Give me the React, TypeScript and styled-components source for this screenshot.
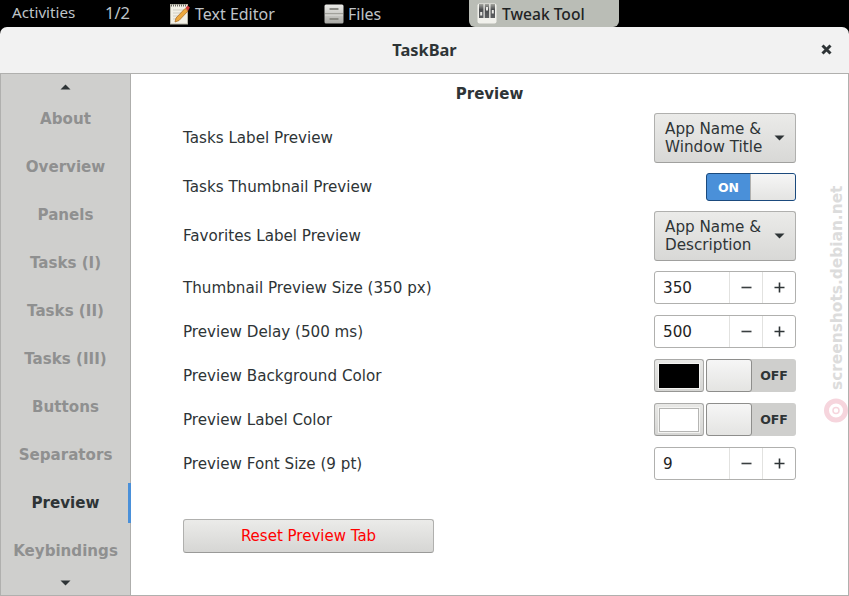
import styled, { createGlobalStyle } from "styled-components";

const GlobalStyle = createGlobalStyle`
  html, body {
    margin: 0;
    padding: 0;
    background: #000;
  }
  #root {
    width: 849px;
    height: 596px;
    overflow: hidden;
  }
`;

const Desktop = styled.div`
  position: relative;
  width: 849px;
  height: 596px;
  display: flex;
  flex-direction: column;
  background: #000;
  font-family: "DejaVu Sans", sans-serif;
  color: #2e3436;
`;

const TopBar = styled.div`
  height: 27px;
  display: flex;
  align-items: stretch;
  font-family: "Noto Sans", sans-serif;
  color: #bfc4c8;
  background: #000;
`;

const PanelText = styled.div<{ $width: number; $pad: number; $size: number }>`
  width: ${(p) => p.$width}px;
  padding-left: ${(p) => p.$pad}px;
  box-sizing: border-box;
  font-size: ${(p) => p.$size}px;
  line-height: 25px;
`;

const TaskTab = styled.div<{ $active?: boolean; $width: number }>`
  width: ${(p) => p.$width}px;
  display: flex;
  align-items: center;
  gap: ${(p) => (p.$active ? 5 : 4)}px;
  padding-left: ${(p) => (p.$active ? 8 : 0)}px;
  box-sizing: border-box;
  border-radius: 0 0 6px 6px;
  background: ${(p) => (p.$active ? "#babdb6" : "transparent")};
  color: ${(p) => (p.$active ? "#1f2324" : "#bfc4c8")};
  font-size: ${(p) => (p.$active ? 15.6 : 16)}px;
  font-weight: ${(p) => (p.$active ? 500 : 400)};
`;

const Window = styled.div`
  flex: 1;
  display: flex;
  flex-direction: column;
  min-height: 0;
  border-radius: 7px 7px 0 0;
  background: #f2f2f2;
  overflow: hidden;
`;

const TitleBar = styled.div`
  position: relative;
  height: 47px;
  flex: none;
  display: flex;
  align-items: center;
  justify-content: center;
  padding-bottom: 2px;
  box-sizing: border-box;
  font-family: "Noto Sans", sans-serif;
  font-weight: 700;
  font-size: 16.4px;
  color: #2e3436;
  border-bottom: 1px solid #b0b0ae;
`;

const CloseGlyph = styled.svg`
  position: absolute;
  right: 17px;
  top: 17px;
`;

const Body = styled.div`
  flex: 1;
  display: flex;
  min-height: 0;
  border: 1px solid #b0b0ae;
  border-top: none;
  background: #fff;
`;

const Sidebar = styled.nav`
  width: 129px;
  flex: none;
  display: flex;
  flex-direction: column;
  align-items: stretch;
  background: #cfcfcd;
  border-right: 1px solid #aeaeac;
  box-sizing: content-box;
`;

const ArrowRow = styled.div<{ $height: number }>`
  height: ${(p) => p.$height}px;
  display: flex;
  justify-content: center;
  align-items: center;
  flex: none;
`;

const SideList = styled.div`
  display: flex;
  flex-direction: column;
  gap: 8px;
`;

const SideItem = styled.div<{ $active?: boolean }>`
  height: 40px;
  margin-right: -1px;
  display: flex;
  align-items: center;
  justify-content: center;
  box-sizing: border-box;
  font-size: 15.1px;
  font-weight: 700;
  color: ${(p) => (p.$active ? "#2e3436" : "#8f9090")};
  border-right: 3px solid ${(p) => (p.$active ? "#4a90d9" : "transparent")};
  padding-left: 2px;
`;

const Content = styled.main`
  flex: 1;
  display: flex;
  flex-direction: column;
  padding: 0 52px 0 52px;
`;

const Heading = styled.h2`
  margin: 0 -52px;
  height: 39px;
  flex: none;
  display: flex;
  align-items: center;
  justify-content: center;
  font-size: 15px;
  font-weight: 700;
  color: #2e3436;
`;

const Rows = styled.div`
  display: flex;
  flex-direction: column;
  gap: 10px;
`;

const Row = styled.div<{ $height: number }>`
  height: ${(p) => p.$height}px;
  display: flex;
  justify-content: space-between;
  align-items: flex-start;
`;

const Label = styled.div<{ $height: number }>`
  height: ${(p) => p.$height}px;
  display: flex;
  align-items: center;
  padding-bottom: 1px;
  box-sizing: border-box;
  font-size: 15.15px;
  color: #2e3436;
`;

const Combo = styled.div`
  width: 142px;
  height: 50px;
  box-sizing: border-box;
  display: flex;
  align-items: center;
  justify-content: space-between;
  padding: 0 10px 0 10px;
  border: 1px solid #b0b0ae;
  border-bottom-color: #a0a09e;
  border-radius: 3px;
  background: linear-gradient(#ebebe9, #d8d8d6);
  font-size: 15.2px;
  line-height: 18px;
  color: #2e3436;
`;

const Caret = styled.svg`
  flex: none;
`;

const Switch = styled.div<{ $on?: boolean; $height: number }>`
  width: 90px;
  height: ${(p) => p.$height}px;
  box-sizing: border-box;
  display: flex;
  align-items: stretch;
  border: ${(p) => (p.$on ? "1px solid #1b4a7d" : "none")};
  border-radius: 3px;
  background: ${(p) => (p.$on ? "#4a90d9" : "#cfcfcd")};
`;

const SwitchText = styled.div<{ $on?: boolean }>`
  flex: 1;
  display: flex;
  align-items: center;
  justify-content: center;
  font-size: 12.5px;
  font-weight: 700;
  color: ${(p) => (p.$on ? "#ffffff" : "#2e3436")};
`;

const SwitchKnob = styled.div<{ $on?: boolean }>`
  width: ${(p) => (p.$on ? 45 : 46)}px;
  flex: none;
  box-sizing: border-box;
  background: linear-gradient(#f6f6f6, #e4e4e2);
  border: 1px solid ${(p) => (p.$on ? "#b0b0ae" : "#8e8e8c")};
  border-width: ${(p) => (p.$on ? "0 0 0 1px" : "1px")};
  border-radius: ${(p) => (p.$on ? "0 2px 2px 0" : "3px")};
`;

const ColorGroup = styled.div`
  display: flex;
  gap: 2px;
`;

const ColorButton = styled.div`
  width: 50px;
  height: 33px;
  box-sizing: border-box;
  display: flex;
  align-items: center;
  justify-content: center;
  border: 1px solid #aaaaa8;
  border-bottom-color: #969694;
  border-radius: 3px;
  background: linear-gradient(#e8e8e6, #d6d6d4);
`;

const Swatch = styled.div<{ $color: string }>`
  width: 40px;
  height: 24px;
  box-sizing: border-box;
  background: ${(p) => p.$color};
  border: 1px solid ${(p) => (p.$color === "#000000" ? "#000000" : "#b5b5b3")};
  outline: 1px solid #f4f4f2;
`;

const Spin = styled.div`
  width: 142px;
  height: 33px;
  box-sizing: border-box;
  display: flex;
  border: 1px solid #b0b0ae;
  border-radius: 3px;
  background: #fff;
`;

const SpinValue = styled.div`
  width: 74px;
  box-sizing: border-box;
  padding-left: 8px;
  display: flex;
  align-items: center;
  font-size: 15.2px;
  color: #1f2324;
`;

const SpinButton = styled.div`
  flex: 1;
  display: flex;
  align-items: center;
  justify-content: center;
  border-left: 1px solid #e2e2e0;
`;

const ResetButton = styled.button`
  width: 251px;
  height: 34px;
  margin-top: 38px;
  padding: 0 0 1px;
  border: 1px solid #b0b0ae;
  border-bottom-color: #9a9a98;
  border-radius: 3px;
  background: linear-gradient(#ebebe9, #d6d6d4);
  font-family: "DejaVu Sans", sans-serif;
  font-size: 15px;
  color: #ff0000;
`;

const Watermark = styled.div`
  position: absolute;
  right: 3px;
  top: 185px;
  height: 205px;
  writing-mode: vertical-rl;
  transform: rotate(180deg);
  font-family: "DejaVu Sans", sans-serif;
  font-weight: 700;
  font-size: 15.4px;
  line-height: 18px;
  color: #dcdcdc;
  white-space: nowrap;
`;

const WatermarkLogo = styled.svg`
  position: absolute;
  left: 824px;
  top: 398px;
`;

const UpCaret = () => (
  <Caret width="11" height="6" viewBox="0 0 11 6">
    <path d="M5.5 0.5 L10.5 5.5 H0.5 Z" fill="#2e3436" />
  </Caret>
);

const DownCaret = () => (
  <Caret width="11" height="6" viewBox="0 0 11 6">
    <path d="M0.5 0.5 H10.5 L5.5 5.5 Z" fill="#2e3436" />
  </Caret>
);

const EditorIcon = () => (
  <svg width="21" height="22" viewBox="0 0 21 22">
    <rect x="0.5" y="1.5" width="17" height="19.5" fill="#f2f0e6" stroke="#b5b3a6" />
    <path d="M1 2.5 H17" stroke="#6a6860" strokeWidth="2" strokeDasharray="1 1" />
    <path d="M3 7 H15 M3 10 H15 M3 13 H10 M3 16 H7" stroke="#cfcdc2" />
    <path d="M5 19 L6 15 L15 5.5 L18 8 L9 17.5 Z" fill="#eda93e" stroke="#a5661c" strokeWidth="0.7" />
    <path d="M15.5 5 L17.5 2.5 L19.8 4.5 L18 8 Z" fill="#d23b3b" />
  </svg>
);

const FilesIcon = () => (
  <svg width="20" height="20" viewBox="0 0 20 20">
    <defs>
      <linearGradient id="cabinet" x1="0" y1="0" x2="0" y2="1">
        <stop offset="0" stopColor="#ebebe8" />
        <stop offset="1" stopColor="#a9a9a5" />
      </linearGradient>
    </defs>
    <rect x="0.5" y="0.5" width="19" height="19" rx="1.5" fill="url(#cabinet)" />
    <path d="M1 10 H19" stroke="#77776f" />
    <path d="M1 10.9 H19" stroke="#e4e4e0" />
    <rect x="5.5" y="4" width="9" height="2" rx="0.5" fill="#8a8a84" />
    <rect x="5.5" y="14" width="9" height="2" rx="0.5" fill="#8a8a84" />
  </svg>
);

const TweakIcon = () => (
  <svg width="20" height="21" viewBox="0 0 20 21">
    <defs>
      <linearGradient id="tweakBar" x1="0" y1="0" x2="0" y2="1">
        <stop offset="0" stopColor="#a4a59f" />
        <stop offset="0.4" stopColor="#4c4e50" />
        <stop offset="1" stopColor="#5d5f61" />
      </linearGradient>
    </defs>
    <rect x="0.5" y="0.5" width="19" height="20" rx="2" fill="#f1f1ec" />
    <rect x="2" y="1" width="4.5" height="14" fill="url(#tweakBar)" />
    <rect x="7.7" y="1" width="4.5" height="14" fill="url(#tweakBar)" />
    <rect x="13.5" y="1" width="4.5" height="14" fill="url(#tweakBar)" />
    <rect x="3.2" y="9" width="2" height="3.5" fill="#e8e8e4" />
    <rect x="9" y="4" width="2" height="3.5" fill="#e8e8e4" />
    <rect x="14.8" y="7" width="2" height="3.5" fill="#e8e8e4" />
  </svg>
);

const MinusIcon = () => (
  <svg width="11" height="11" viewBox="0 0 11 11">
    <path d="M0.5 5.5 H10.5" stroke="#3a3f41" strokeWidth="1.6" />
  </svg>
);

const PlusIcon = () => (
  <svg width="11" height="11" viewBox="0 0 11 11">
    <path d="M0.5 5.5 H10.5 M5.5 0.5 V10.5" stroke="#2e3436" strokeWidth="1.6" />
  </svg>
);

const sideItems = [
  "About",
  "Overview",
  "Panels",
  "Tasks (I)",
  "Tasks (II)",
  "Tasks (III)",
  "Buttons",
  "Separators",
  "Preview",
  "Keybindings",
];

const SpinBox = ({ value }: { value: string }) => (
  <Spin>
    <SpinValue>{value}</SpinValue>
    <SpinButton>
      <MinusIcon />
    </SpinButton>
    <SpinButton>
      <PlusIcon />
    </SpinButton>
  </Spin>
);

const ColorToggle = ({ color }: { color: string }) => (
  <ColorGroup>
    <ColorButton>
      <Swatch $color={color} />
    </ColorButton>
    <Switch $height={33}>
      <SwitchKnob />
      <SwitchText>OFF</SwitchText>
    </Switch>
  </ColorGroup>
);

export default function App() {
  return (
    <Desktop>
      <GlobalStyle />
      <TopBar>
        <PanelText $width={105} $pad={12} $size={15.2}>
          Activities
        </PanelText>
        <PanelText $width={65} $pad={0} $size={16.5}>
          1/2
        </PanelText>
        <TaskTab $width={154}>
          <EditorIcon />
          <span>Text Editor</span>
        </TaskTab>
        <TaskTab $width={145}>
          <FilesIcon />
          <span>Files</span>
        </TaskTab>
        <TaskTab $width={150} $active>
          <TweakIcon />
          <span>Tweak Tool</span>
        </TaskTab>
      </TopBar>
      <Window>
        <TitleBar>
          TaskBar
          <CloseGlyph width="11" height="11" viewBox="0 0 11 11">
            <path d="M1.5 1.5 L9.5 9.5 M9.5 1.5 L1.5 9.5" stroke="#2e3436" strokeWidth="3" />
          </CloseGlyph>
        </TitleBar>
        <Body>
          <Sidebar>
            <ArrowRow $height={25}>
              <UpCaret />
            </ArrowRow>
            <SideList>
              {sideItems.map((item) => (
                <SideItem key={item} $active={item === "Preview"}>
                  {item}
                </SideItem>
              ))}
            </SideList>
            <ArrowRow $height={24}>
              <DownCaret />
            </ArrowRow>
          </Sidebar>
          <Content>
            <Heading>Preview</Heading>
            <Rows>
              <Row $height={50}>
                <Label $height={50}>Tasks Label Preview</Label>
                <Combo>
                  <span>
                    App Name &amp;
                    <br />
                    Window Title
                  </span>
                  <DownCaret />
                </Combo>
              </Row>
              <Row $height={28}>
                <Label $height={28}>Tasks Thumbnail Preview</Label>
                <Switch $on $height={28}>
                  <SwitchText $on>ON</SwitchText>
                  <SwitchKnob $on />
                </Switch>
              </Row>
              <Row $height={50}>
                <Label $height={50}>Favorites Label Preview</Label>
                <Combo>
                  <span>
                    App Name &amp;
                    <br />
                    Description
                  </span>
                  <DownCaret />
                </Combo>
              </Row>
              <Row $height={34}>
                <Label $height={34}>Thumbnail Preview Size (350 px)</Label>
                <SpinBox value="350" />
              </Row>
              <Row $height={34}>
                <Label $height={34}>Preview Delay (500 ms)</Label>
                <SpinBox value="500" />
              </Row>
              <Row $height={34}>
                <Label $height={34}>Preview Background Color</Label>
                <ColorToggle color="#000000" />
              </Row>
              <Row $height={34}>
                <Label $height={34}>Preview Label Color</Label>
                <ColorToggle color="#ffffff" />
              </Row>
              <Row $height={34}>
                <Label $height={34}>Preview Font Size (9 pt)</Label>
                <SpinBox value="9" />
              </Row>
            </Rows>
            <ResetButton>Reset Preview Tab</ResetButton>
          </Content>
        </Body>
      </Window>
      <Watermark>screenshots.debian.net</Watermark>
      <WatermarkLogo width="25" height="25" viewBox="0 0 25 25">
        <circle cx="12" cy="12.5" r="9.5" fill="none" stroke="#f6d5dd" strokeWidth="5" />
        <circle cx="12" cy="12.5" r="3" fill="none" stroke="#f6d5dd" strokeWidth="1.5" />
      </WatermarkLogo>
    </Desktop>
  );
}
